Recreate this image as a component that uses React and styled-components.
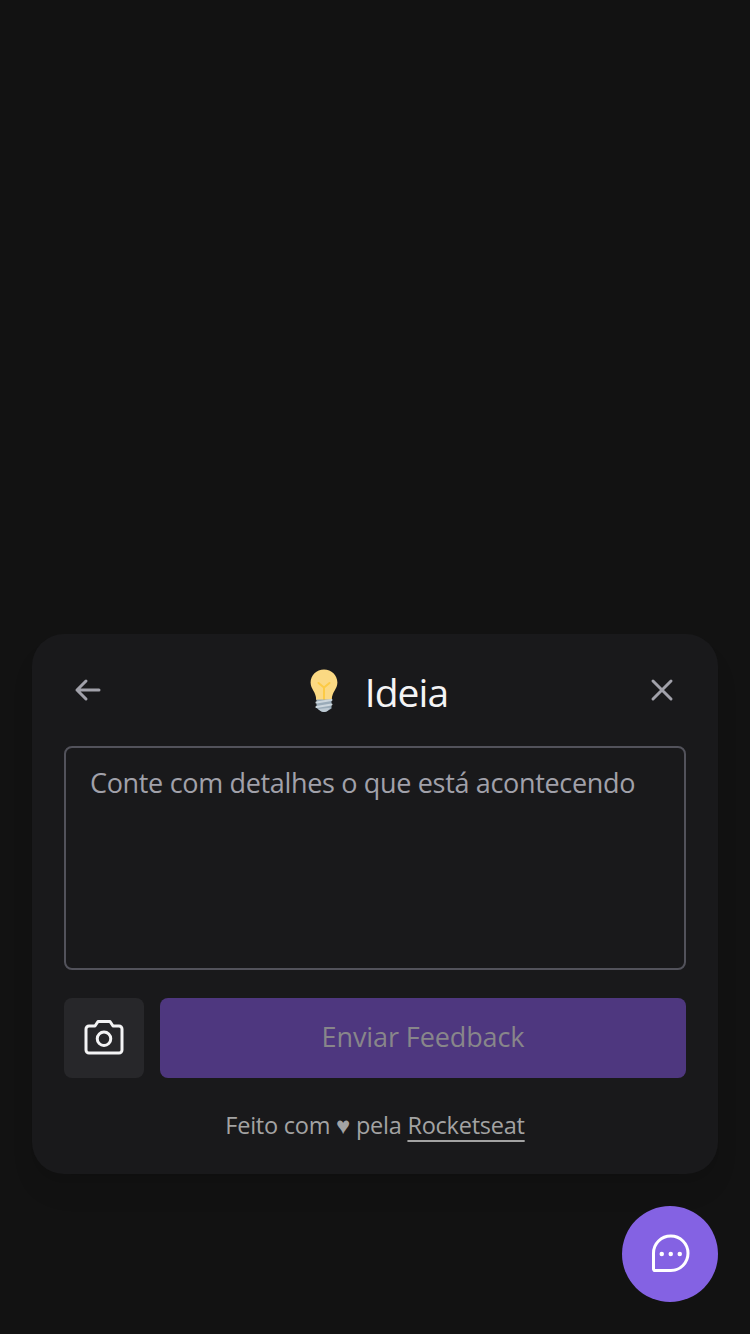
import React from 'react';
import styled, { createGlobalStyle } from 'styled-components';

const GlobalStyle = createGlobalStyle`
  * { box-sizing: border-box; }
  body { margin: 0; background: #121212; font-family: "Open Sans", sans-serif; }
  button { font: inherit; border: 0; padding: 0; }
`;

const Page = styled.main`
  height: 1334px;
  display: flex;
  flex-direction: column;
  justify-content: flex-end;
  align-items: flex-end;
  gap: 32px;
  padding: 32px;
`;

const Card = styled.section`
  width: 686px;
  height: 540px;
  padding: 32px;
  border-radius: 32px;
  background: #19191b;
  box-shadow: 0 20px 30px -6px rgba(0, 0, 0, 0.08), 0 8px 12px -8px rgba(0, 0, 0, 0.08);
`;

const Header = styled.header`
  display: flex;
  justify-content: space-between;
  height: 80px;
  padding: 8px;
`;

const IconButton = styled.button`
  display: flex;
  width: 32px;
  height: 32px;
  background: transparent;
  color: #a1a1aa;
`;

const Title = styled.h1`
  display: flex;
  gap: 27px;
  margin: -6px 0 0 8px;
  color: #f4f4f5;
  font-size: 39px;
  font-weight: 400;
  line-height: 48px;
  letter-spacing: -0.9px;
`;

const Message = styled.textarea`
  display: block;
  width: 622px;
  height: 224px;
  padding: 15px 24px;
  border: 2px solid #52525b;
  border-radius: 8px;
  outline: 0;
  resize: none;
  overflow: hidden;
  background: transparent;
  font: 400 27px/40px "Open Sans", sans-serif;
  letter-spacing: -0.33px;
  color: #f4f4f5;
  &::placeholder { color: #a1a1aa; }
`;

const Actions = styled.div`
  display: flex;
  gap: 16px;
  margin-top: 28px;
`;

const CameraButton = styled.button`
  display: grid;
  place-items: center;
  width: 80px;
  height: 80px;
  border-radius: 8px;
  background: #27272a;
  color: #f4f4f5;
`;

const SendButton = styled.button`
  flex: 1;
  height: 80px;
  padding-bottom: 2px;
  border-radius: 8px;
  background: #4e377f;
  color: #88868a;
  font-size: 27px;
  line-height: 40px;
  letter-spacing: -0.1px;
`;

const Footer = styled.footer`
  margin-top: 31px;
  text-align: center;
  color: #a3a3a3;
  font-size: 23.5px;
  line-height: 32px;
  letter-spacing: -0.24px;
  white-space: nowrap;
`;

const Heart = styled.span`
  font-family: "Liberation Sans", sans-serif;
  font-size: 24px;
`;

const Link = styled.a`
  text-decoration: underline;
  text-decoration-thickness: 2px;
  text-underline-offset: 6px;
  text-decoration-skip-ink: none;
`;

const ChatButton = styled.button`
  display: grid;
  place-items: center;
  width: 96px;
  height: 96px;
  border-radius: 50%;
  background: #8462e3;
  color: #fff;
`;

const Icon = ({ size, weight = 16, children }) => (
  <svg width={size} height={size} viewBox="0 0 256 256" fill="none" stroke="currentColor"
    strokeWidth={weight} strokeLinecap="round" strokeLinejoin="round">{children}</svg>
);

const BulbIcon = styled.svg`
  margin-top: 1px;
`;

const Bulb = () => (
  <BulbIcon width="28" height="44" viewBox="0 0 28 44" fill="none">
    <path d="M14 .5C6.500.500.600 6.200.600 13.600c0 6.800 5.600 9.200 5.600 17.400h15.600c0-8.200 5.600-10.600 5.600-17.400C27.400 6.200 21.500.500 14 .500Z" fill="#fbd983" />
    <path d="m8.500 14 5.500 4.500 5.500-4.500M14 18.500V31" stroke="#fccb45" strokeWidth="2" strokeLinecap="round" strokeLinejoin="round" />
    <path d="M6.500 30.500h15v9L17 42.200q-3 1.600-6 0L6.500 39Z" fill="#9aabb8" />
    <path d="m6.500 33.500 15-2.500m-15 7 15-2.500" stroke="#ccd6dd" strokeWidth="2" strokeLinecap="round" />
    <path d="m8 40 12.500-1.200L17 42.200q-3 1.600-6 0Z" fill="#bdc9d2" />
  </BulbIcon>
);

export default function App() {
  return (
    <>
      <GlobalStyle />
      <Page>
        <Card>
          <Header>
            <IconButton aria-label="Voltar">
              <Icon size={32} weight={24}><path d="M216 128H40M112 56 40 128l72 72" /></Icon>
            </IconButton>
            <Title><Bulb /><span>Ideia</span></Title>
            <IconButton aria-label="Fechar">
              <Icon size={32} weight={24}><path d="M200 56 56 200M200 200 56 56" /></Icon>
            </IconButton>
          </Header>
          <Message placeholder="Conte com detalhes o que está acontecendo" />
          <Actions>
            <CameraButton aria-label="Capturar tela">
              <Icon size={48}>
                <path d="M208 208H48a16 16 0 0 1-16-16V80a16 16 0 0 1 16-16h32l16-24h64l16 24h32a16 16 0 0 1 16 16v112a16 16 0 0 1-16 16Z" />
                <circle cx="128" cy="132" r="36" />
              </Icon>
            </CameraButton>
            <SendButton>Enviar Feedback</SendButton>
          </Actions>
          <Footer>Feito com <Heart>♥</Heart> pela <Link>Rocketseat</Link></Footer>
        </Card>
        <ChatButton aria-label="Feedback">
          <Icon size={48}>
            <path d="M132 216H47.700a7.600 7.600 0 0 1-7.700-7.700V124a92 92 0 0 1 92-92 92 92 0 0 1 92 92 92 92 0 0 1-92 92Z" />
            <g fill="currentColor" stroke="none">
              <circle cx="84" cy="128" r="12" /><circle cx="132" cy="128" r="12" /><circle cx="180" cy="128" r="12" />
            </g>
          </Icon>
        </ChatButton>
      </Page>
    </>
  );
}
